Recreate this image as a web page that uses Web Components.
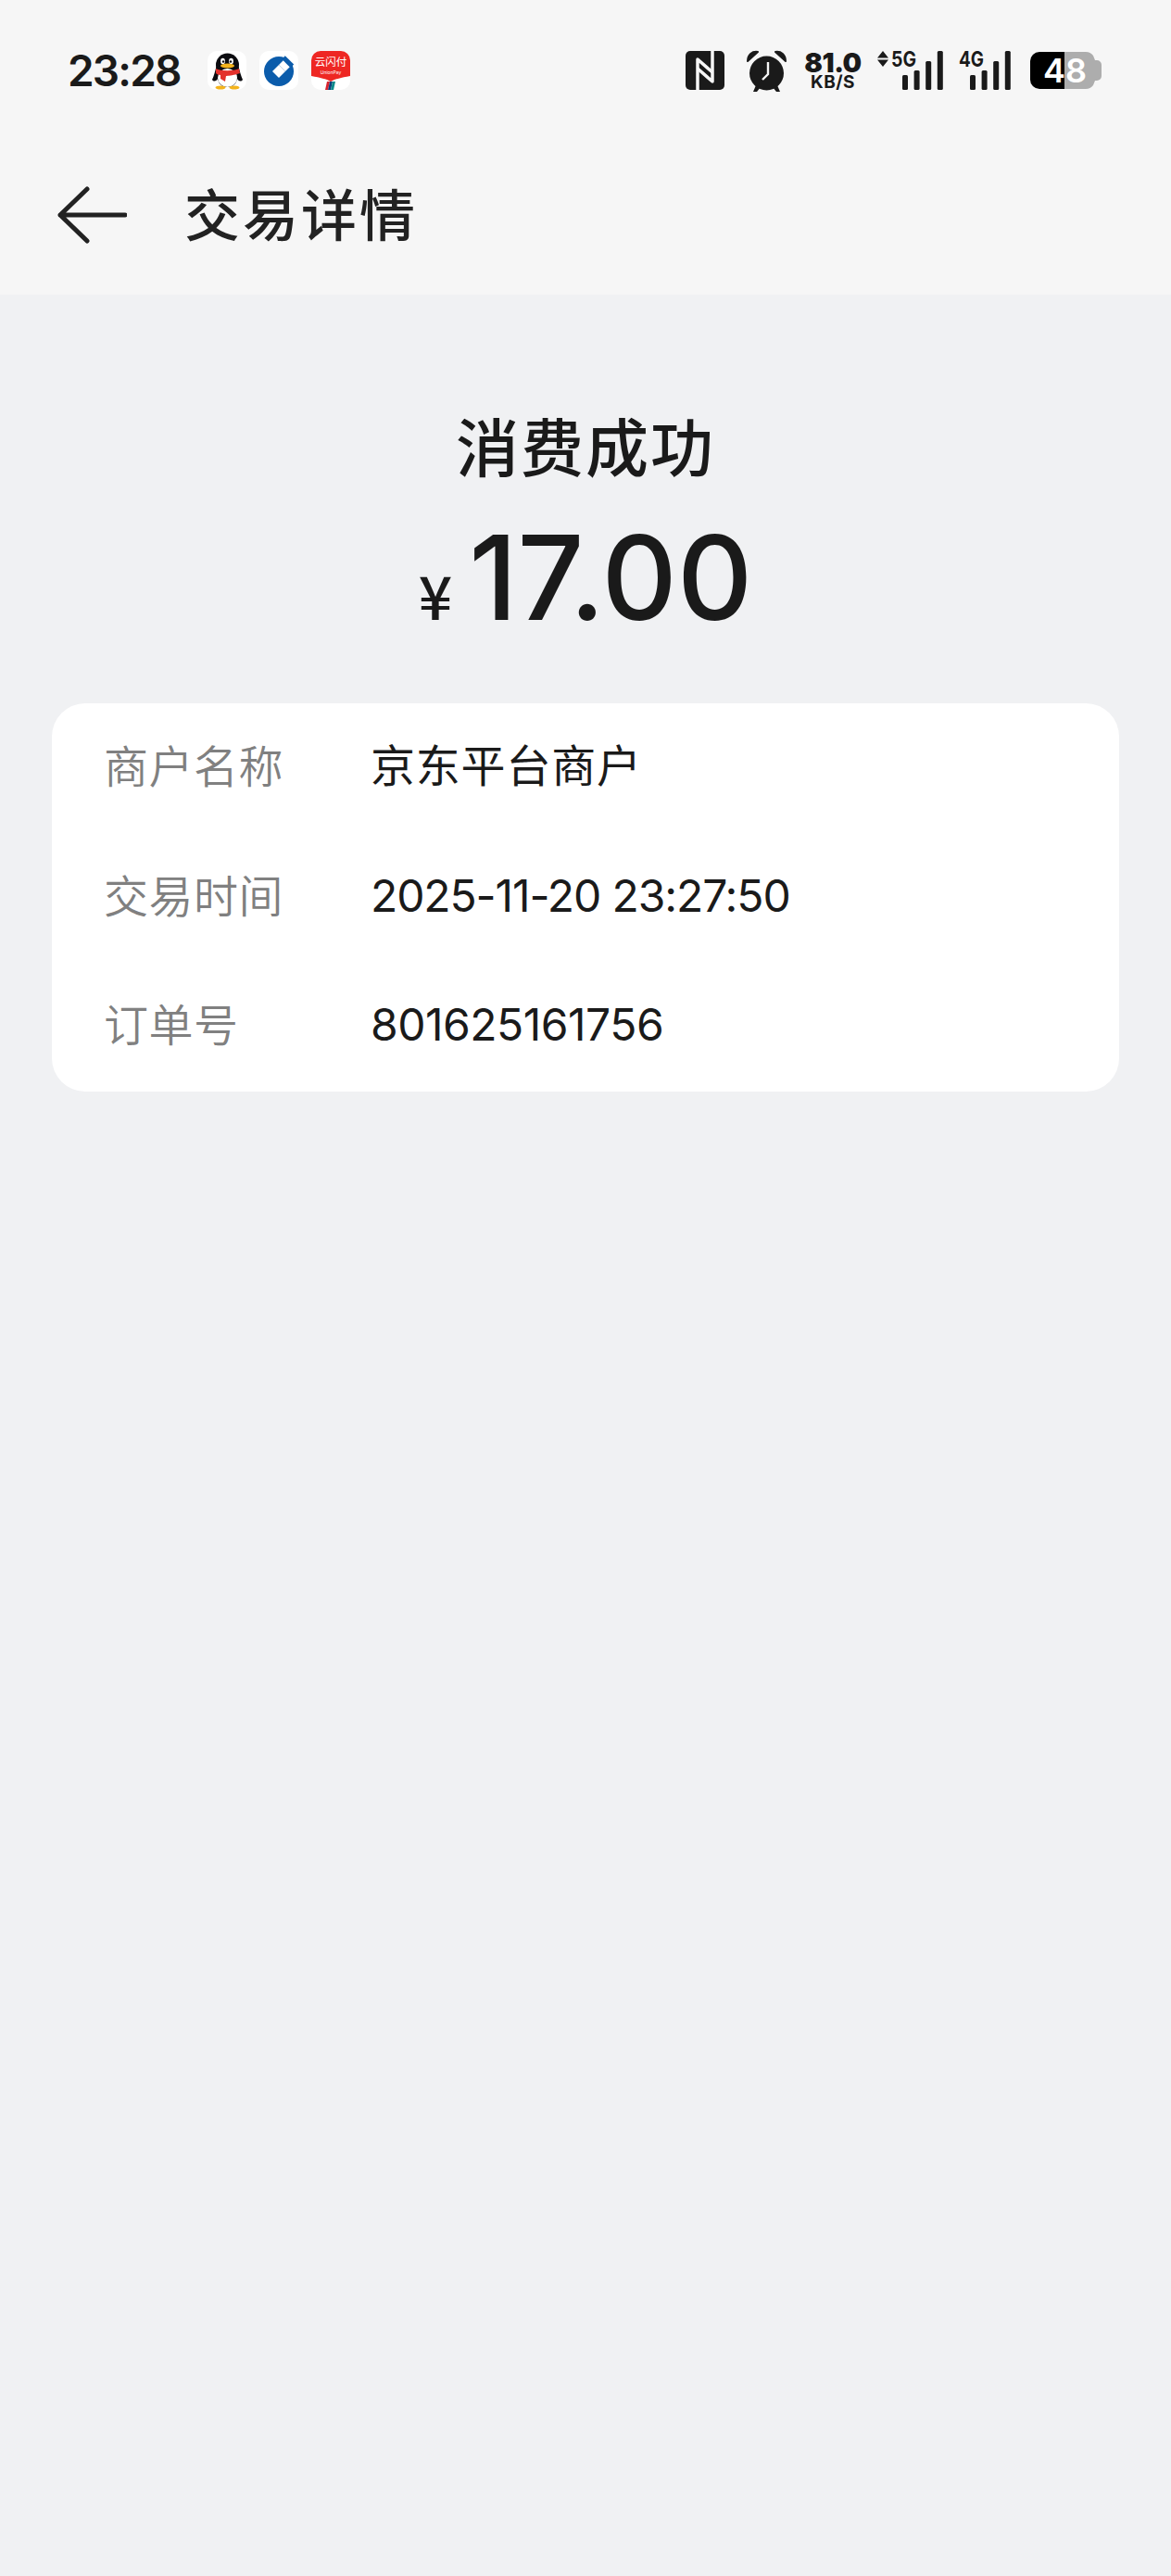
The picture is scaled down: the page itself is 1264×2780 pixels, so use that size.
<!DOCTYPE html>
<html lang="zh-CN">
<head>
<meta charset="utf-8">
<title>交易详情</title>
<style>
    html, body { margin: 0; padding: 0; background: #f0f1f3; }
    body { font-family: Inter, "Noto Sans CJK SC", sans-serif; }
    #page { display: block; width: 1264px; height: 2780px; overflow: hidden; }
</style>
</head>
<body>
<div id="page">
    <status-bar time="23:28"></status-bar>
    <nav-bar>交易详情</nav-bar>
    <pay-result status="消费成功" amount="17.00"></pay-result>
    <detail-card>
        <detail-row label="商户名称" style="--value-spacing: .8px">京东平台商户</detail-row>
        <detail-row label="交易时间" style="--value-spacing: -1.1px">2025-11-20 23:27:50</detail-row>
        <detail-row label="订单号" style="--value-spacing: -.5px">801625161756</detail-row>
    </detail-card>
</div>

<script>
class AppIcon extends HTMLElement {
    connectedCallback() {
        const drawings = {
            qq: `
                <path d="M10 15 C8 22 7 27 5 31 C7 34 10 32 11 30 C12 36 16 39 21.5 39 C27 39 31 36 32 30 C33 32 36 34 38 31 C36 27 35 22 33 15Z" fill="#0c0c10"/>
                <circle cx="21.5" cy="15" r="12.5" fill="#0c0c10"/>
                <ellipse cx="21.5" cy="29" rx="10.5" ry="10" fill="#fff"/>
                <ellipse cx="16.5" cy="11" rx="2.4" ry="3.2" fill="#fff"/>
                <ellipse cx="25.5" cy="11" rx="2.4" ry="3.2" fill="#fff"/>
                <circle cx="17" cy="11.5" r="1.2" fill="#0c0c10"/>
                <circle cx="25" cy="11.5" r="1.2" fill="#0c0c10"/>
                <ellipse cx="21.5" cy="16" rx="7.5" ry="2.6" fill="#f4b31c"/>
                <path d="M9 19 C15 22 28 22 34 19 L35 24 C30 26 22 27 20 27 L19 33 L14 30 L14 26 C12 26 10 25 9 24Z" fill="#e3312c"/>
                <ellipse cx="14" cy="39.5" rx="5.5" ry="2" fill="#f4b31c"/>
                <ellipse cx="29" cy="39.5" rx="5.5" ry="2" fill="#f4b31c"/>`,
            ccb: `
                <circle cx="21" cy="22" r="16" fill="#0b5cab"/>
                <polygon points="21,15 28,22 21,29 14,22" fill="#fff"/>
                <polygon points="21,15 35,1 42,8 28,22" fill="#fff"/>
                <polygon points="27.8,5.2 37.2,14.6 33.6,18.2 24.2,8.8" fill="#0b5cab"/>`,
            unionpay: `
                <path d="M6 0 H36 A6 6 0 0 1 42 6 V27 C32 29 26 30 21 33 C16 30 10 29 0 27 V6 A6 6 0 0 1 6 0Z" fill="#ee2723"/>
                <text x="21" y="16" text-anchor="middle" font-size="11.5" fill="#fff" font-family="Noto Sans CJK SC, sans-serif">云闪付</text>
                <text x="21" y="25" text-anchor="middle" font-size="5" fill="#fff" font-family="Inter, sans-serif">UnionPay</text>
                <polygon points="15,42 17,33 20,33 18,42" fill="#d9232e"/>
                <polygon points="18,42 20,33 23,33 21,42" fill="#0d3f7c"/>
                <polygon points="21,42 23,33 26,33 24,42" fill="#0a8a8a"/>`
        }
        const root = this.attachShadow({ mode: 'open' })
        root.innerHTML = `
            <style>
                :host { display: block; width: 42px; height: 42px; background: #fff; border-radius: 10px; overflow: hidden; }
                svg { display: block; }
            </style>
            <svg width="42" height="42" viewBox="0 0 42 42">${drawings[this.getAttribute('name')]}</svg>
        `
    }
}

class SignalBars extends HTMLElement {
    connectedCallback() {
        const root = this.attachShadow({ mode: 'open' })
        const arrows = this.hasAttribute('arrows')
        const start = arrows ? 27 : 12
        const tops = [26, 21, 11, 0]
        const bars = tops.map((top, i) => `<rect x="${start + i * 12.6}" y="${top}" width="6" height="${42 - top}" rx="1.5"/>`).join('')
        const width = start + 44
        root.innerHTML = `
            <style>
                :host { display: block; width: ${width}px; height: 42px; }
                svg { display: block; fill: #1a1a1a; overflow: visible; }
                text { font: 700 23px Inter, sans-serif; }
            </style>
            <svg width="${width}" height="42" viewBox="0 0 ${width} 42">
                ${arrows ? '<path d="M0 7.5 L6 0 L12 7.5Z M0 9.5 L6 17 L12 9.5Z"/>' : ''}
                <text x="${arrows ? 15 : 0}" y="17" textLength="27" lengthAdjust="spacingAndGlyphs">${this.getAttribute('label')}</text>
                ${bars}
            </svg>
        `
    }
}

class StatusBar extends HTMLElement {
    connectedCallback() {
        const root = this.attachShadow({ mode: 'open' })
        root.innerHTML = `
            <style>
                :host { display: flex; align-items: center; height: 152px; padding: 0 74px 0 73px; background: #f6f6f6; color: #1a1a1a; box-sizing: border-box; }
                .time { font: 600 46px/1 Inter, sans-serif; width: 151px; letter-spacing: -1.8px; }
                .apps { display: flex; gap: 14px; }
                .right { margin-left: auto; display: flex; align-items: center; }
                svg { display: block; }
                .speed { margin-left: 18px; width: 64px; text-align: center; font-family: Inter, sans-serif; font-weight: 700; }
                .speed b { display: block; font-size: 29px; line-height: 25px; letter-spacing: -.5px; }
                .speed span { display: block; font-size: 19px; line-height: 17px; letter-spacing: .5px; }
                .sig5 { margin-left: 16px; }
                .sig4 { margin-left: 17px; }
                .battery { margin-left: 21px; position: relative; width: 78px; height: 40px; }
                .battery .num { position: absolute; left: 14px; top: 0; width: 44px; text-align: center; font: 600 36px/40px Inter, sans-serif; color: #fff; }
            </style>
            <div class="time">${this.getAttribute('time')}</div>
            <div class="apps">
                <app-icon name="qq"></app-icon>
                <app-icon name="ccb"></app-icon>
                <app-icon name="unionpay"></app-icon>
            </div>
            <div class="right">
                <svg width="42" height="42" viewBox="0 0 42 42">
                    <rect width="42" height="42" rx="5" fill="#1a1a1a"/>
                    <path d="M13 42 V9 L29 23" fill="none" stroke="#f6f6f6" stroke-width="3.5" stroke-linejoin="round"/>
                    <path d="M29 0 V33 L13 19" fill="none" stroke="#f6f6f6" stroke-width="3.5" stroke-linejoin="round"/>
                </svg>
                <svg style="margin-left:24px" width="43" height="45" viewBox="0 0 43 45">
                    <circle cx="21.5" cy="25" r="18.5" fill="#1a1a1a"/>
                    <path d="M1 12 C1 5 6 1 12 2 Z M42 12 C42 5 37 1 31 2 Z" fill="#1a1a1a" stroke="#1a1a1a" stroke-width="2" stroke-linejoin="round"/>
                    <path d="M10 38 L7 45 H11 L15 40Z M33 38 L36 45 H32 L28 40Z" fill="#1a1a1a"/>
                    <path d="M23 13 V26 L17 32" fill="none" stroke="#f6f6f6" stroke-width="2.4"/>
                </svg>
                <div class="speed"><b>81.0</b><span>KB/S</span></div>
                <signal-bars class="sig5" label="5G" arrows></signal-bars>
                <signal-bars class="sig4" label="4G"></signal-bars>
                <div class="battery">
                    <svg width="78" height="40" viewBox="0 0 78 40">
                        <path d="M68 4 A10 10 0 0 0 60 0 H37 V40 H60 A10 10 0 0 0 68 36 L70 31 H72 A5 5 0 0 0 77 26 V14 A5 5 0 0 0 72 9 H70Z" fill="#adadad"/>
                        <path d="M37 0 H10 A10 10 0 0 0 0 10 V30 A10 10 0 0 0 10 40 H37Z" fill="#000"/>
                    </svg>
                    <div class="num">48</div>
                </div>
            </div>
        `
    }
}

class NavBar extends HTMLElement {
    constructor() {
        super()
        this.attachShadow({ mode: 'open' })
        this.shadowRoot.innerHTML = `
            <style>
                :host { display: flex; align-items: center; height: 166px; padding: 0 0 6px 62px; background: #f6f6f6; box-sizing: border-box; color: #222; }
                svg { display: block; }
                .title { margin: -6px 0 0 62px; font: 500 60px/1 "Noto Sans CJK SC", sans-serif; letter-spacing: 3px; }
            </style>
            <svg width="75" height="62" viewBox="0 0 75 62">
                <path d="M32 3 L3 31 L32 59 M3 31 H73" fill="none" stroke="#222" stroke-width="5" stroke-linecap="round" stroke-linejoin="round"/>
            </svg>
            <div class="title"><slot></slot></div>
        `
    }
}

class PayResult extends HTMLElement {
    connectedCallback() {
        const root = this.attachShadow({ mode: 'open' })
        root.innerHTML = `
            <style>
                :host { display: flex; flex-direction: column; align-items: center; padding: 122px 0 63px; color: #1a1a1a; }
                .status { font: 500 68px/80px "Noto Sans CJK SC", sans-serif; letter-spacing: 2px; }
                .amount { display: flex; align-items: baseline; margin-top: 30px; height: 146px; }
                .cur { font: 500 64px/1 "Noto Sans CJK SC", sans-serif; margin-right: 18px; }
                .num { font: 500 126px/146px Inter, sans-serif; letter-spacing: 0; }
            </style>
            <div class="status">${this.getAttribute('status')}</div>
            <div class="amount"><span class="cur">¥</span><span class="num">${this.getAttribute('amount')}</span></div>
        `
    }
}

class DetailCard extends HTMLElement {
    constructor() {
        super()
        this.attachShadow({ mode: 'open' })
        this.shadowRoot.innerHTML = `
            <style>
                :host { display: flex; flex-direction: column; margin: 0 56px; height: 419px; background: #fff; border-radius: 36px; justify-content: center; }
            </style>
            <slot></slot>
        `
    }
}

class DetailRow extends HTMLElement {
    connectedCallback() {
        const root = this.attachShadow({ mode: 'open' })
        root.innerHTML = `
            <style>
                :host { display: flex; align-items: center; height: 140px; padding: 0 0 4px 56px; box-sizing: border-box; font: 400 48px/1 Inter, "Noto Sans CJK SC", sans-serif; }
                .label { width: 288px; padding-bottom: 6px; color: #808080; font-family: "Noto Sans CJK SC", sans-serif; font-weight: 350; letter-spacing: .5px; }
                .value { color: #1a1a1a; letter-spacing: var(--value-spacing, 0); }
            </style>
            <div class="label">${this.getAttribute('label')}</div>
            <div class="value"><slot></slot></div>
        `
    }
}

customElements.define('app-icon', AppIcon)
customElements.define('signal-bars', SignalBars)
customElements.define('status-bar', StatusBar)
customElements.define('nav-bar', NavBar)
customElements.define('pay-result', PayResult)
customElements.define('detail-card', DetailCard)
customElements.define('detail-row', DetailRow)
</script>
</body>
</html>
